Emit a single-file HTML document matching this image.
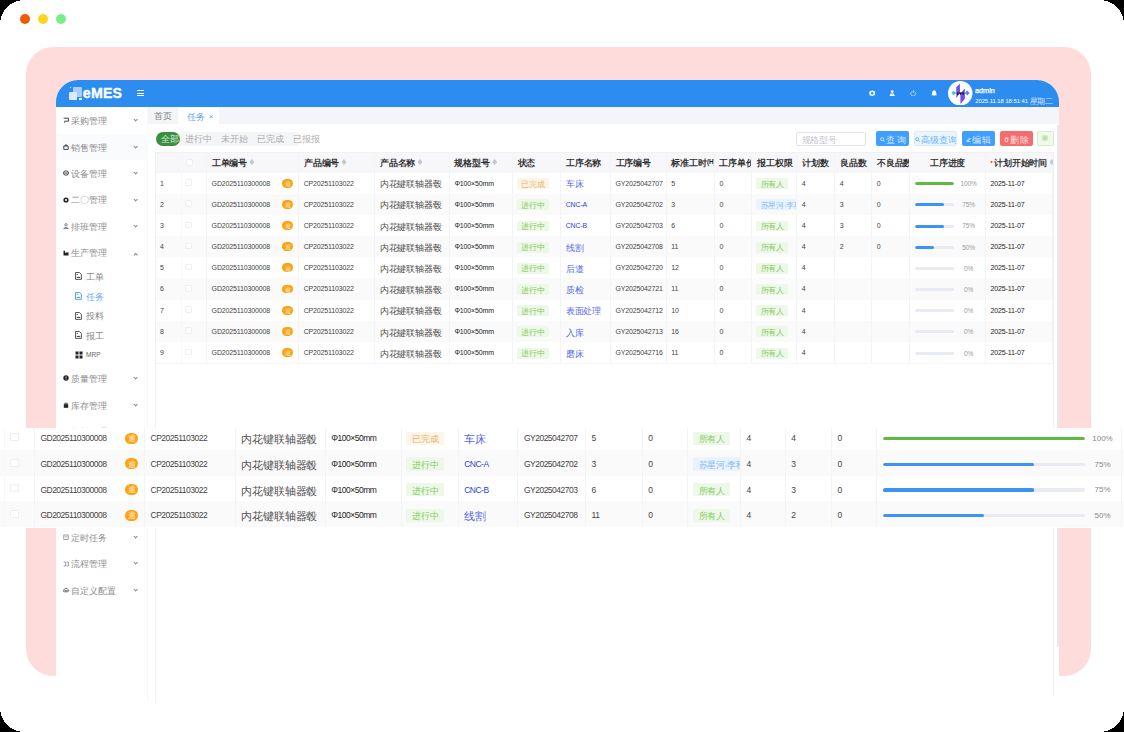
<!DOCTYPE html>
<html><head><meta charset="utf-8"><title>eMES</title>
<style>
*{margin:0;padding:0;box-sizing:border-box}
html,body{width:1124px;height:732px;overflow:hidden;background:#000;font-family:"Liberation Sans",sans-serif}
i{font-style:normal;display:inline-block}
.frame{position:absolute;left:0;top:0;width:1124px;height:732px;overflow:hidden}
.bgsvg{position:absolute;left:0;top:0}
.dot{position:absolute;top:13.5px;width:10px;height:10px;border-radius:50%}
.d1{left:20.2px;background:#F05A00}
.d2{left:38px;background:#FFD524}
.d3{left:56.1px;background:#78F08A}
.pink{position:absolute;left:26px;top:47px;width:1065px;height:629px;background:#FFDCDC;border-radius:27px}
.app{position:absolute;left:56px;top:80px;width:1003px;height:622px;background:#fff;border-radius:22px 22px 0 0;overflow:hidden}
.hdr{position:absolute;left:0;top:0;width:1003px;height:27px;background:#2D8CF0}
.logo{position:absolute;left:0;top:0}
.lq1{position:absolute;left:16.5px;top:6.7px;width:9.3px;height:10.2px;background:#A9CDF8;border-radius:1px}
.lq2{position:absolute;left:12.5px;top:11.6px;width:8.9px;height:8.4px;background:#DCEBFD;border-radius:1px}
.lq3{position:absolute;left:23.3px;top:17.8px;width:2.5px;height:2.2px;background:#fff}
.lq4{position:absolute;left:14px;top:7px;width:1.2px;height:1.2px;background:#fff}
.lt{position:absolute;left:26.8px;top:5.3px;font-size:14.2px;font-weight:bold;color:#fff;line-height:17px;letter-spacing:0.2px;-webkit-text-stroke:0.35px #fff}
.burger{position:absolute;left:81px;top:10.2px;width:7px;height:6.3px}
.burger i{display:block;height:1.1px;background:#fff;margin-bottom:1.5px}
.hsvg{position:absolute}
.avatar{position:absolute;left:892px;top:0.7px;width:24.5px;height:24.5px}
.avatar svg{display:block}
.uname{position:absolute;left:919px;top:5.6px;font-size:7.3px;color:#fff;line-height:9px;-webkit-text-stroke:0.25px #fff}
.udate{position:absolute;left:919.2px;top:17.6px;font-size:5.8px;color:#fff;line-height:7px;white-space:nowrap}
.side{position:absolute;left:0;top:27px;width:92px;height:595px;background:#fff}
.sideline{position:absolute;left:91.4px;top:27px;width:1px;height:595px;background:#F7F8FA}
.mi{position:absolute;left:0;width:92px;height:26.2px;margin-top:-13.1px}
.mi .mic{position:absolute;left:7.7px;top:10.6px;width:5px;height:5px;border:1.2px solid #444;border-radius:1px}
.mi .mt{position:absolute;left:15.4px;top:0;line-height:26.2px;font-size:6.5px;color:#707070}
.chev{position:absolute;left:77.6px;top:10.8px;width:3.4px;height:3.4px;border-right:0.7px solid #8a8a8a;border-bottom:0.7px solid #8a8a8a;transform:rotate(45deg)}
.chev.up{transform:rotate(-135deg);top:13px}
.si{position:absolute;left:0;width:92px;height:20px;margin-top:-10px}
.si .doc{position:absolute;left:19.1px;top:6.2px;width:6.8px;height:7.6px;border:1px solid #333;border-radius:1px}
.si .mt{position:absolute;left:30.1px;top:0;line-height:20px;font-size:6.5px;color:#666}
.si.act .doc{border-color:#3D8FF5}
.si.act .mt{color:#3D8FF5}
.tabbar{position:absolute;left:92px;top:27px;width:911px;height:16.5px;background:#F3F5F8}
.tab0{position:absolute;left:0;top:0;width:27px;height:16.5px;line-height:16.5px;font-size:6.5px;color:#666;padding-left:6px}
.tab1{position:absolute;left:30px;top:1px;width:40.5px;height:15.5px;background:#fff;line-height:15px;font-size:6.5px;color:#2D8CF0;padding-left:9px}
.tab1 .x{margin-left:4px;color:#5A9BEA;font-size:8px;vertical-align:-0.5px}
.pills{position:absolute;left:99.8px;top:51.5px;width:145.2px;height:14.9px;background:#F4F5F7;border-radius:7.5px;font-size:6.5px;color:#999;line-height:14.9px;white-space:nowrap}
.pill{display:inline-block;height:14.9px;padding:0 4.4px;margin-right:0.5px}
.pill.act{background:#3A8F3E;color:#fff;border-radius:7.5px;width:24.5px;padding:0 0 0 5px}
.search{position:absolute;left:740px;top:51.5px;width:70.4px;height:14.4px;border:0.8px solid #E2E4EA;border-radius:2px;font-size:6.3px;color:#B5B8BF;line-height:13px;padding-left:4.5px}
.btn{position:absolute;top:51.2px;height:14.4px;border-radius:2px;font-size:6.3px;line-height:15.6px;text-align:center;color:#fff;white-space:nowrap;overflow:hidden}
.bp{background:#409EFF}
.bl{background:#ECF5FF;border:0.8px solid #D9ECFF;color:#409EFF;line-height:14px}
.br{background:#F56C6C}
.bg{background:#F0F9EB;border:0.8px solid #D5EDC8;color:#67C23A;line-height:12.5px}
.tblwrap{position:absolute;left:0;top:72px;width:1003px;height:550px}
.tline{position:absolute;top:72px;width:1px;height:630px;background:#EEF0F6}
.vscroll{position:absolute;left:1001px;top:45.2px;width:2px;height:521.5px;background:#E8E9EE}
.mtbl,.stbl{position:absolute;top:0}
.stbl{top:-3.2px}
.thead{position:absolute;left:0;background:#F7F7F9;border-top:1px solid #F0F1F7}
.th,.td{position:absolute;top:0;padding-left:5px;white-space:nowrap;overflow:hidden}
.th{font-size:6.3px;font-weight:bold;color:#1a1a1a}
.th.center{text-align:center;padding-left:0}
.vl{position:absolute;width:1px;background:#F3F4F8}
.tr{position:absolute;left:0;background:#fff}
.tr.stripe{background:#FAFAFA}
.td{font-size:7px;color:#444;letter-spacing:-0.15px}
.dk{color:#222}
.lnk{color:#2E3FE0}
.sort{display:inline-block;width:4.4px;height:6px;margin-left:2.4px;vertical-align:middle;position:relative;top:-0.3px;background:linear-gradient(#C4C7CE 44%,transparent 44%,transparent 56%,#C4C7CE 56%);clip-path:polygon(50% 0,100% 42%,100% 58%,50% 100%,0 58%,0 42%)}
.req{color:#F44;margin-right:1px}
.cb{display:inline-block;width:7px;height:7px;border:0.8px solid #EDEFF3;border-radius:1px;background:#fff;vertical-align:middle}
.td.c1,.th .hcb{}
.td.c1{padding-left:4px}
.mtbl .td .cb{position:relative;top:-1.2px;width:6.6px;height:6.6px}
.th .hcb{margin-left:-0.4px}
.yu{position:absolute;right:5.7px;top:50%;margin-top:-4.45px;width:10.8px;height:8.9px;border-radius:4.5px;background:#FFA20F;color:#fff;font-size:5px;line-height:8.9px;text-align:center;letter-spacing:0}
.tag{display:inline-block;height:10.9px;line-height:10.9px;padding:0 3.6px 0 4.6px;border-radius:1.5px;font-size:5.7px;vertical-align:middle;letter-spacing:0}
.to{background:#FDF5EA;color:#E6A23C}
.tg{background:#EEF8E8;color:#67C23A}
.tb{background:#EAF3FF;color:#6AAEF5}
.pbar{display:inline-block;width:39px;height:3px;border-radius:1.5px;background:#E8EBF2;vertical-align:middle;position:relative;overflow:hidden}
.pfill{position:absolute;left:0;top:0;height:3px;border-radius:1.5px;background:#3D92F5}
.pfill.pg{background:#5DBB3D}
.pct{display:inline-block;margin-left:5.5px;width:19px;text-align:center;color:#999;font-size:6.5px;vertical-align:middle}
.strip{position:absolute;left:0;top:427.5px;width:1124px;height:100.5px;background:#fff;overflow:hidden}
.stbl .td{font-size:8.5px;letter-spacing:-0.5px}
.stbl .td{padding-left:6px;padding-top:2px}
.stbl .td.c15{padding-top:1.6px}
.stbl .cb{width:8.2px;height:8.2px}
.stbl .yu{width:12.5px;height:11px;margin-top:-4.4px;border-radius:5.5px;line-height:11px;font-size:6px;right:6.5px}
.stbl .tag{height:13.5px;line-height:13.5px;font-size:6.9px;padding:0 4.8px 0 5.9px;position:relative;top:-0.7px}
.stbl .pbar{width:202.5px;height:3.2px;border-radius:1.6px}
.stbl .pfill{height:3.2px;border-radius:1.6px}
.stbl .pct{margin-left:5px;width:25px;font-size:8px;letter-spacing:0;color:#888}

.hov{position:absolute;left:0;top:27px;width:92px;height:26.2px;background:#FAFBFD}
.mi .mic{position:absolute;left:7.2px;top:10.1px;width:6px;height:6px;border:none}
.mi .mic svg,.si .doc svg{display:block}
.si .doc{border:none;left:18.8px;top:6.2px;width:7.1px;height:8px}
.bi{display:inline-block;vertical-align:middle;margin-right:1px;position:relative;top:-0.5px}
.bg svg{display:inline-block;vertical-align:middle;position:relative;top:-0.5px}

.stbl .td.c1{padding-top:0}


.zh{font-size:1.35em;letter-spacing:-0.01em;vertical-align:-0.2em;opacity:0.8}
.td .zh{font-size:1.25em;letter-spacing:-0.015em}
.td .tag .zh{font-size:1.35em;letter-spacing:-0.01em}
.stbl .td .zh{font-size:1.25em;letter-spacing:-0.015em}
.stbl .td .tag .zh{font-size:1.35em;letter-spacing:-0.01em}
.th .zh{opacity:0.9}
.tag{margin-left:-0.9px}
.hl{position:absolute;height:1px;background:#F4F5F9}
.vl.vlf{background:#F8F8FB}

</style></head><body>
<div class="frame">
 <svg class="bgsvg" width="1124" height="732" viewBox="0 0 1124 732"><rect x="0" y="0" width="1124" height="732" rx="24.5" ry="24.5" fill="#fff" shape-rendering="crispEdges"/></svg>
 <i class="dot d1"></i><i class="dot d2"></i><i class="dot d3"></i>
 <div class="pink"></div>
 <div class="app">
  <div class="hdr">
   <div class="logo"><i class="lq1"></i><i class="lq2"></i><i class="lq3"></i><i class="lq4"></i><span class="lt">eMES</span></div>
   <div class="burger"><i></i><i></i><i></i></div>

   <svg class="hsvg" style="left:812.8px;top:9.5px" width="6.4" height="6.4" viewBox="0 0 8 8"><path d="M4 0.4L5.3 1.2H6.8L7.6 2.6V5.4L6.8 6.8H5.3L4 7.6L2.7 6.8H1.2L0.4 5.4V2.6L1.2 1.2H2.7Z" fill="#fff"/><circle cx="4" cy="4" r="1.6" fill="#2D8CF0"/></svg>
   <svg class="hsvg" style="left:833.3px;top:9.8px" width="6.4" height="6.4" viewBox="0 0 8 8"><circle cx="4" cy="2" r="1.7" fill="#fff"/><path d="M0.6 7.8L2 4.4H6L7.4 7.8Z" fill="#fff"/><path d="M4 4.6L3.2 6H4.8Z" fill="#2D8CF0"/></svg>
   <svg class="hsvg" style="left:854.3px;top:9.9px" width="6.4" height="6.4" viewBox="0 0 8 8"><path d="M2.3 1.9A3.1 3.1 0 1 0 5.7 1.9" fill="none" stroke="#fff" stroke-width="0.75"/><rect x="3.6" y="0.3" width="0.8" height="3.4" fill="#fff"/></svg>
   <svg class="hsvg" style="left:875.1px;top:9.8px" width="6.4" height="6.4" viewBox="0 0 8 8"><path d="M4 0.3Q6.6 0.6 6.6 3.4V5.4L7.6 6.6H0.4L1.4 5.4V3.4Q1.4 0.6 4 0.3Z" fill="#fff"/><circle cx="4" cy="7.3" r="0.8" fill="#fff"/></svg>

   <div class="avatar"><svg width="24.5" height="24.5" viewBox="0 0 24.5 24.5"><circle cx="12.25" cy="12.25" r="12.2" fill="#fff"/>
<defs><linearGradient id="pg" x1="0" y1="0" x2="1" y2="1"><stop offset="0" stop-color="#5B5BF0"/><stop offset="1" stop-color="#8A3BE8"/></linearGradient></defs>
<g transform="translate(-1.9,-0.6)"><path d="M5.3 12.6L7.5 10.2L9.7 12.6L7.5 15Z" fill="#3ED8C3"/><path d="M19 12.6L21.2 10.2L23.4 12.6L21.2 15Z" fill="#3C8CF8"/>
<rect x="8" y="12.2" width="12" height="0.9" fill="#6C7CF0"/>
<path d="M13.7 3L13.9 12.6L10.3 17.6L10.1 7.2Z" fill="url(#pg)"/><path d="M18.7 8L18.8 18.3L14.4 23.6L14.2 13.2Z" fill="url(#pg)"/>
<path d="M11 12.2H17.8V14.4H16.6V13.2H15V14.4H13.8V13.2H12.2V14.6H11Z" fill="#1A1A1A"/></g></svg></div>
   <div class="uname">admin</div>
   <div class="udate">2025.11.18 18:51:41 <span class="zh">星期二</span></div>
  </div>
  <div class="side">
<div class="hov"></div>
<div class="mi" style="top:13.3px"><i class="mic"><svg width="6" height="6" viewBox="0 0 6 6"><path d="M0.6 1.2H5.4V4.2H1.4" fill="none" stroke="#333" stroke-width="0.9"/><rect x="1" y="4.6" width="1" height="1" fill="#333"/></svg></i><span class="mt"><span class="zh">采购管理</span></span><i class="chev"></i></div>
<div class="mi" style="top:40px"><i class="mic"><svg width="6" height="6" viewBox="0 0 6 6"><path d="M0.8 2H5.2V5.4H0.8Z" fill="none" stroke="#333" stroke-width="0.9"/><path d="M2 2V1H4V2" fill="none" stroke="#333" stroke-width="0.8"/></svg></i><span class="mt"><span class="zh">销售管理</span></span><i class="chev"></i></div>
<div class="mi" style="top:66.3px"><i class="mic"><svg width="6" height="6" viewBox="0 0 6 6"><ellipse cx="3" cy="3" rx="2.5" ry="2.2" fill="none" stroke="#333" stroke-width="0.9"/><rect x="1.2" y="2.6" width="3.6" height="0.9" fill="#333"/></svg></i><span class="mt"><span class="zh">设备管理</span></span><i class="chev"></i></div>
<div class="mi" style="top:92.8px"><i class="mic"><svg width="6" height="6" viewBox="0 0 6 6"><circle cx="3" cy="3" r="2.6" fill="#222"/><circle cx="3" cy="3" r="1.1" fill="#fff"/></svg></i><span class="mt"><span class="zh">二〇管理</span></span><i class="chev"></i></div>
<div class="mi" style="top:119.3px"><i class="mic"><svg width="6" height="6" viewBox="0 0 6 6"><circle cx="3" cy="1.8" r="1.2" fill="none" stroke="#555" stroke-width="0.7"/><path d="M0.6 5.6Q3 2.8 5.4 5.6Z" fill="none" stroke="#555" stroke-width="0.7"/></svg></i><span class="mt"><span class="zh">排班管理</span></span><i class="chev"></i></div>
<div class="mi" style="top:145.8px"><i class="mic"><svg width="6" height="6" viewBox="0 0 6 6"><path d="M0.5 5.6V0.8H2V3L3.6 2V3L5.5 2V5.6Z" fill="#222"/></svg></i><span class="mt"><span class="zh">生产管理</span></span><i class="chev up"></i></div>
<div class="si" style="top:168.8px"><i class="doc"><svg width="7.1" height="8" viewBox="0 0 8 9"><path d="M0.6 0.6H5.2L7.2 2.6V8.3H0.6Z" fill="none" stroke="#333" stroke-width="0.95"/><rect x="2" y="2.2" width="1.2" height="1.1" fill="#333"/><rect x="2" y="5.5" width="3.8" height="1.1" fill="#333"/></svg></i><span class="mt"><span class="zh">工单</span></span></div>
<div class="si act" style="top:188.8px"><i class="doc"><svg width="7.1" height="8" viewBox="0 0 8 9"><path d="M0.6 0.6H5.2L7.2 2.6V8.3H0.6Z" fill="none" stroke="#3D8FF5" stroke-width="0.95"/><rect x="2" y="2.2" width="1.2" height="1.1" fill="#3D8FF5"/><rect x="2" y="5.5" width="3.8" height="1.1" fill="#3D8FF5"/></svg></i><span class="mt"><span class="zh">任务</span></span></div>
<div class="si" style="top:208.7px"><i class="doc"><svg width="7.1" height="8" viewBox="0 0 8 9"><path d="M0.6 0.6H5.2L7.2 2.6V8.3H0.6Z" fill="none" stroke="#333" stroke-width="0.95"/><rect x="2" y="2.2" width="1.2" height="1.1" fill="#333"/><rect x="2" y="5.5" width="3.8" height="1.1" fill="#333"/></svg></i><span class="mt"><span class="zh">投料</span></span></div>
<div class="si" style="top:228.2px"><i class="doc"><svg width="7.1" height="8" viewBox="0 0 8 9"><path d="M0.6 0.6H5.2L7.2 2.6V8.3H0.6Z" fill="none" stroke="#333" stroke-width="0.95"/><rect x="2" y="2.2" width="1.2" height="1.1" fill="#333"/><rect x="2" y="5.5" width="3.8" height="1.1" fill="#333"/></svg></i><span class="mt"><span class="zh">报工</span></span></div>
<div class="si" style="top:247.8px"><i class="doc"><svg width="8" height="8" viewBox="0 0 8 8"><rect x="0.5" y="0.5" width="3" height="3" fill="#222"/><rect x="4.5" y="0.5" width="3" height="3" fill="#222"/><rect x="0.5" y="4.5" width="3" height="3" fill="#222"/><rect x="4.5" y="4.5" width="3" height="3" fill="#222"/></svg></i><span class="mt">MRP</span></div>
<div class="mi" style="top:271.3px"><i class="mic"><svg width="6" height="6" viewBox="0 0 6 6"><circle cx="3" cy="3" r="2.7" fill="#222"/><rect x="2.6" y="1.5" width="0.8" height="1.8" fill="#fff"/><rect x="2.6" y="3.9" width="0.8" height="0.7" fill="#fff"/></svg></i><span class="mt"><span class="zh">质量管理</span></span><i class="chev"></i></div>
<div class="mi" style="top:298px"><i class="mic"><svg width="6" height="6" viewBox="0 0 6 6"><rect x="0.8" y="2.2" width="4.4" height="3.6" fill="#222"/><path d="M1.8 2.4V1.2H4.2V2.4" fill="none" stroke="#222" stroke-width="0.8"/></svg></i><span class="mt"><span class="zh">库存管理</span></span><i class="chev"></i></div>
<div class="mi" style="top:324.5px"><i class="mic"><svg width="6" height="6" viewBox="0 0 6 6"><path d="M0.6 1.2H5.4V4.2H1.4" fill="none" stroke="#333" stroke-width="0.9"/><rect x="1" y="4.6" width="1" height="1" fill="#333"/></svg></i><span class="mt"><span class="zh">物料管理</span></span><i class="chev"></i></div>
<div class="mi" style="top:351px"><i class="mic"><svg width="6" height="6" viewBox="0 0 6 6"><ellipse cx="3" cy="3" rx="2.5" ry="2.2" fill="none" stroke="#333" stroke-width="0.9"/><rect x="1.2" y="2.6" width="3.6" height="0.9" fill="#333"/></svg></i><span class="mt"><span class="zh">基础数据</span></span><i class="chev"></i></div>
<div class="mi" style="top:377.5px"><i class="mic"><svg width="6" height="6" viewBox="0 0 6 6"><rect x="0.8" y="1" width="4.4" height="4.5" fill="none" stroke="#777" stroke-width="0.7"/><rect x="1.5" y="2.6" width="3" height="0.6" fill="#777"/></svg></i><span class="mt"><span class="zh">报表管理</span></span><i class="chev"></i></div>
<div class="mi" style="top:404px"><i class="mic"><svg width="6" height="6" viewBox="0 0 6 6"><circle cx="3" cy="3" r="2.6" fill="#222"/><circle cx="3" cy="3" r="1.1" fill="#fff"/></svg></i><span class="mt"><span class="zh">系统管理</span></span><i class="chev"></i></div>
<div class="mi" style="top:430px"><i class="mic"><svg width="6" height="6" viewBox="0 0 6 6"><rect x="0.8" y="1" width="4.4" height="4.5" fill="none" stroke="#777" stroke-width="0.7"/><rect x="1.5" y="2.6" width="3" height="0.6" fill="#777"/></svg></i><span class="mt"><span class="zh">定时任务</span></span><i class="chev"></i></div>
<div class="mi" style="top:456.7px"><i class="mic"><svg width="6" height="6" viewBox="0 0 6 6"><path d="M0.6 1H2.6V5H0.6M3.4 1H5.4V5H3.4" fill="none" stroke="#777" stroke-width="0.7"/></svg></i><span class="mt"><span class="zh">流程管理</span></span><i class="chev"></i></div>
<div class="mi" style="top:483px"><i class="mic"><svg width="6" height="6" viewBox="0 0 6 6"><path d="M1 4.8Q0.2 4.6 0.6 3.4Q1 2 2.6 1.4Q4.4 1 5.2 2.8Q5.8 4.4 4.8 4.8Z" fill="none" stroke="#444" stroke-width="0.8"/><rect x="1.6" y="3.2" width="2.8" height="0.7" fill="#444"/></svg></i><span class="mt"><span class="zh">自定义配置</span></span><i class="chev"></i></div>
  </div>
  <div class="sideline"></div>
  <div class="tabbar"><span class="tab0"><span class="zh">首页</span></span><span class="tab1"><span class="zh">任务</span><i class="x">×</i></span></div>
  <div class="pills"><span class="pill act"><span class="zh">全部</span></span><span class="pill"><span class="zh">进行中</span></span><span class="pill"><span class="zh">未开始</span></span><span class="pill"><span class="zh">已完成</span></span><span class="pill"><span class="zh">已报报</span></span></div>
  <div class="search"><span class="zh">规格型号</span></div>
  <div class="btn bp" style="left:820.3px;width:32.9px"><svg class="bi" width="5" height="5" viewBox="0 0 5 5"><circle cx="2.2" cy="2.2" r="1.6" fill="none" stroke="#fff" stroke-width="0.7"/><path d="M3.4 3.4L4.6 4.6" stroke="#fff" stroke-width="0.7"/></svg><span class="zh">查</span> <span class="zh">询</span></div>
  <div class="btn bl" style="left:858.3px;width:42.7px"><svg class="bi" width="5" height="5" viewBox="0 0 5 5"><circle cx="2.2" cy="2.2" r="1.6" fill="none" stroke="#409EFF" stroke-width="0.7"/><path d="M3.4 3.4L4.6 4.6" stroke="#409EFF" stroke-width="0.7"/></svg><span class="zh">高级查询</span></div>
  <div class="btn bp" style="left:906.1px;width:33px"><svg class="bi" width="5" height="5" viewBox="0 0 5 5"><path d="M0.6 4.4H4.4M1 3.6L3.6 1L4.2 1.6L1.6 4.2Z" fill="none" stroke="#fff" stroke-width="0.7"/></svg><span class="zh">编</span> <span class="zh">辑</span></div>
  <div class="btn br" style="left:944.2px;width:32.6px"><svg class="bi" width="5" height="5" viewBox="0 0 5 5"><path d="M0.6 1.2H4.4M1.2 1.2V4.6H3.8V1.2M2 0.4H3" fill="none" stroke="#fff" stroke-width="0.7"/></svg><span class="zh">删</span> <span class="zh">除</span></div>
  <div class="btn bg" style="left:981.3px;width:16.4px"><svg width="6" height="6" viewBox="0 0 6 6"><path d="M0.8 0.8H5.2V5.2H0.8ZM0.8 2.3H5.2M0.8 3.7H5.2M2.3 0.8V5.2M3.7 0.8V5.2" fill="none" stroke="#7CC85A" stroke-width="0.35"/></svg></div>
<div class="mtbl" style="left:99px;top:72px;width:898px">
<div class="thead" style="top:0;height:20.5px;width:898px"></div>
<div class="th" style="left:0px;width:26px;height:20.5px;line-height:20.5px"></div>
<div class="th c1" style="left:26px;width:25.6px;height:20.5px;line-height:20.5px"><i class="cb"></i></div>
<div class="vl vlf" style="left:25.5px;top:0;height:20.5px"></div>
<div class="th" style="left:51.6px;width:92.1px;height:20.5px;line-height:20.5px"><span class="zh">工单编号</span><i class="sort"></i></div>
<div class="vl" style="left:51.1px;top:0;height:20.5px"></div>
<div class="th" style="left:143.7px;width:76.0px;height:20.5px;line-height:20.5px"><span class="zh">产品编号</span><i class="sort"></i></div>
<div class="vl" style="left:143.2px;top:0;height:20.5px"></div>
<div class="th" style="left:219.7px;width:74.7px;height:20.5px;line-height:20.5px"><span class="zh">产品名称</span><i class="sort"></i></div>
<div class="vl" style="left:219.2px;top:0;height:20.5px"></div>
<div class="th" style="left:294.4px;width:63.1px;height:20.5px;line-height:20.5px"><span class="zh">规格型号</span><i class="sort"></i></div>
<div class="vl" style="left:293.9px;top:0;height:20.5px"></div>
<div class="th" style="left:357.5px;width:48.2px;height:20.5px;line-height:20.5px"><span class="zh">状态</span></div>
<div class="vl" style="left:357.0px;top:0;height:20.5px"></div>
<div class="th" style="left:405.7px;width:49.8px;height:20.5px;line-height:20.5px"><span class="zh">工序名称</span></div>
<div class="vl" style="left:405.2px;top:0;height:20.5px"></div>
<div class="th" style="left:455.5px;width:55.8px;height:20.5px;line-height:20.5px"><span class="zh">工序编号</span></div>
<div class="vl" style="left:455.0px;top:0;height:20.5px"></div>
<div class="th" style="left:511.3px;width:48.1px;height:20.5px;line-height:20.5px"><span class="zh">标准工时</span>(H)</div>
<div class="vl" style="left:510.8px;top:0;height:20.5px"></div>
<div class="th" style="left:559.4px;width:37.4px;height:20.5px;line-height:20.5px"><span class="zh">工序单价</span></div>
<div class="vl" style="left:558.9px;top:0;height:20.5px"></div>
<div class="th" style="left:596.8px;width:44.9px;height:20.5px;line-height:20.5px"><span class="zh">报工权限</span></div>
<div class="vl" style="left:596.3px;top:0;height:20.5px"></div>
<div class="th" style="left:641.7px;width:38.1px;height:20.5px;line-height:20.5px"><span class="zh">计划数</span></div>
<div class="vl" style="left:641.2px;top:0;height:20.5px"></div>
<div class="th" style="left:679.8px;width:36.9px;height:20.5px;line-height:20.5px"><span class="zh">良品数</span></div>
<div class="vl" style="left:679.3px;top:0;height:20.5px"></div>
<div class="th" style="left:716.7px;width:37.9px;height:20.5px;line-height:20.5px"><span class="zh">不良品数</span></div>
<div class="vl" style="left:716.2px;top:0;height:20.5px"></div>
<div class="th center" style="left:754.6px;width:76.0px;height:20.5px;line-height:20.5px"><span class="zh">工序进度</span></div>
<div class="vl" style="left:754.1px;top:0;height:20.5px"></div>
<div class="th" style="left:830.6px;width:67.4px;height:20.5px;line-height:20.5px"><i class="req">•</i><span class="zh">计划开始时间</span><i class="sort"></i></div>
<div class="vl" style="left:830.1px;top:0;height:20.5px"></div>
<div class="tr" style="top:20.5px;height:21.18px;width:898px">
<div class="td" style="left:0px;width:26px;height:21.18px;line-height:21.18px">1</div>
<div class="td c1" style="left:26px;width:25.6px;height:21.18px;line-height:21.18px"><i class="cb"></i></div>
<div class="vl vlf" style="left:25.5px;top:0;height:21.18px"></div>
<div class="td" style="left:51.6px;width:92.1px;height:21.18px;line-height:21.18px">GD2025110300008<i class="yu"><span class="zh">逾</span></i></div>
<div class="vl" style="left:51.1px;top:0;height:21.18px"></div>
<div class="td" style="left:143.7px;width:76.0px;height:21.18px;line-height:21.18px">CP20251103022</div>
<div class="vl" style="left:143.2px;top:0;height:21.18px"></div>
<div class="td" style="left:219.7px;width:74.7px;height:21.18px;line-height:21.18px"><span class="dk"><span class="zh">内花键联轴器毂</span></span></div>
<div class="vl" style="left:219.2px;top:0;height:21.18px"></div>
<div class="td" style="left:294.4px;width:63.1px;height:21.18px;line-height:21.18px"><span class="dk">Φ100×50mm</span></div>
<div class="vl" style="left:293.9px;top:0;height:21.18px"></div>
<div class="td" style="left:357.5px;width:48.2px;height:21.18px;line-height:21.18px"><span class="tag to"><span class="zh">已完成</span></span></div>
<div class="vl" style="left:357.0px;top:0;height:21.18px"></div>
<div class="td" style="left:405.7px;width:49.8px;height:21.18px;line-height:21.18px"><span class="lnk"><span class="zh">车床</span></span></div>
<div class="vl" style="left:405.2px;top:0;height:21.18px"></div>
<div class="td" style="left:455.5px;width:55.8px;height:21.18px;line-height:21.18px">GY2025042707</div>
<div class="vl" style="left:455.0px;top:0;height:21.18px"></div>
<div class="td" style="left:511.3px;width:48.1px;height:21.18px;line-height:21.18px">5</div>
<div class="vl" style="left:510.8px;top:0;height:21.18px"></div>
<div class="td" style="left:559.4px;width:37.4px;height:21.18px;line-height:21.18px">0</div>
<div class="vl" style="left:558.9px;top:0;height:21.18px"></div>
<div class="td" style="left:596.8px;width:44.9px;height:21.18px;line-height:21.18px"><span class="tag tg"><span class="zh">所有人</span></span></div>
<div class="vl" style="left:596.3px;top:0;height:21.18px"></div>
<div class="td" style="left:641.7px;width:38.1px;height:21.18px;line-height:21.18px">4</div>
<div class="vl" style="left:641.2px;top:0;height:21.18px"></div>
<div class="td" style="left:679.8px;width:36.9px;height:21.18px;line-height:21.18px">4</div>
<div class="vl" style="left:679.3px;top:0;height:21.18px"></div>
<div class="td" style="left:716.7px;width:37.9px;height:21.18px;line-height:21.18px">0</div>
<div class="vl" style="left:716.2px;top:0;height:21.18px"></div>
<div class="td c15" style="left:754.6px;width:76.0px;height:21.18px;line-height:21.18px"><span class="pbar"><span class="pfill pg" style="width:100%"></span></span><span class="pct">100%</span></div>
<div class="vl" style="left:754.1px;top:0;height:21.18px"></div>
<div class="td" style="left:830.6px;width:67.4px;height:21.18px;line-height:21.18px"><span class="dk">2025-11-07</span></div>
<div class="vl" style="left:830.1px;top:0;height:21.18px"></div>
<div class="vl" style="left:896.5px;top:0;height:21.18px"></div>
</div>
<div class="tr stripe" style="top:41.68px;height:21.18px;width:898px">
<div class="td" style="left:0px;width:26px;height:21.18px;line-height:21.18px">2</div>
<div class="td c1" style="left:26px;width:25.6px;height:21.18px;line-height:21.18px"><i class="cb"></i></div>
<div class="vl vlf" style="left:25.5px;top:0;height:21.18px"></div>
<div class="td" style="left:51.6px;width:92.1px;height:21.18px;line-height:21.18px">GD2025110300008<i class="yu"><span class="zh">逾</span></i></div>
<div class="vl" style="left:51.1px;top:0;height:21.18px"></div>
<div class="td" style="left:143.7px;width:76.0px;height:21.18px;line-height:21.18px">CP20251103022</div>
<div class="vl" style="left:143.2px;top:0;height:21.18px"></div>
<div class="td" style="left:219.7px;width:74.7px;height:21.18px;line-height:21.18px"><span class="dk"><span class="zh">内花键联轴器毂</span></span></div>
<div class="vl" style="left:219.2px;top:0;height:21.18px"></div>
<div class="td" style="left:294.4px;width:63.1px;height:21.18px;line-height:21.18px"><span class="dk">Φ100×50mm</span></div>
<div class="vl" style="left:293.9px;top:0;height:21.18px"></div>
<div class="td" style="left:357.5px;width:48.2px;height:21.18px;line-height:21.18px"><span class="tag tg"><span class="zh">进行中</span></span></div>
<div class="vl" style="left:357.0px;top:0;height:21.18px"></div>
<div class="td" style="left:405.7px;width:49.8px;height:21.18px;line-height:21.18px"><span class="lnk">CNC-A</span></div>
<div class="vl" style="left:405.2px;top:0;height:21.18px"></div>
<div class="td" style="left:455.5px;width:55.8px;height:21.18px;line-height:21.18px">GY2025042702</div>
<div class="vl" style="left:455.0px;top:0;height:21.18px"></div>
<div class="td" style="left:511.3px;width:48.1px;height:21.18px;line-height:21.18px">3</div>
<div class="vl" style="left:510.8px;top:0;height:21.18px"></div>
<div class="td" style="left:559.4px;width:37.4px;height:21.18px;line-height:21.18px">0</div>
<div class="vl" style="left:558.9px;top:0;height:21.18px"></div>
<div class="td" style="left:596.8px;width:44.9px;height:21.18px;line-height:21.18px"><span class="tag tb"><span class="zh">苏星河</span>,<span class="zh">李秋水</span></span></div>
<div class="vl" style="left:596.3px;top:0;height:21.18px"></div>
<div class="td" style="left:641.7px;width:38.1px;height:21.18px;line-height:21.18px">4</div>
<div class="vl" style="left:641.2px;top:0;height:21.18px"></div>
<div class="td" style="left:679.8px;width:36.9px;height:21.18px;line-height:21.18px">3</div>
<div class="vl" style="left:679.3px;top:0;height:21.18px"></div>
<div class="td" style="left:716.7px;width:37.9px;height:21.18px;line-height:21.18px">0</div>
<div class="vl" style="left:716.2px;top:0;height:21.18px"></div>
<div class="td c15" style="left:754.6px;width:76.0px;height:21.18px;line-height:21.18px"><span class="pbar"><span class="pfill" style="width:75%"></span></span><span class="pct">75%</span></div>
<div class="vl" style="left:754.1px;top:0;height:21.18px"></div>
<div class="td" style="left:830.6px;width:67.4px;height:21.18px;line-height:21.18px"><span class="dk">2025-11-07</span></div>
<div class="vl" style="left:830.1px;top:0;height:21.18px"></div>
<div class="vl" style="left:896.5px;top:0;height:21.18px"></div>
</div>
<div class="tr" style="top:62.86px;height:21.18px;width:898px">
<div class="td" style="left:0px;width:26px;height:21.18px;line-height:21.18px">3</div>
<div class="td c1" style="left:26px;width:25.6px;height:21.18px;line-height:21.18px"><i class="cb"></i></div>
<div class="vl vlf" style="left:25.5px;top:0;height:21.18px"></div>
<div class="td" style="left:51.6px;width:92.1px;height:21.18px;line-height:21.18px">GD2025110300008<i class="yu"><span class="zh">逾</span></i></div>
<div class="vl" style="left:51.1px;top:0;height:21.18px"></div>
<div class="td" style="left:143.7px;width:76.0px;height:21.18px;line-height:21.18px">CP20251103022</div>
<div class="vl" style="left:143.2px;top:0;height:21.18px"></div>
<div class="td" style="left:219.7px;width:74.7px;height:21.18px;line-height:21.18px"><span class="dk"><span class="zh">内花键联轴器毂</span></span></div>
<div class="vl" style="left:219.2px;top:0;height:21.18px"></div>
<div class="td" style="left:294.4px;width:63.1px;height:21.18px;line-height:21.18px"><span class="dk">Φ100×50mm</span></div>
<div class="vl" style="left:293.9px;top:0;height:21.18px"></div>
<div class="td" style="left:357.5px;width:48.2px;height:21.18px;line-height:21.18px"><span class="tag tg"><span class="zh">进行中</span></span></div>
<div class="vl" style="left:357.0px;top:0;height:21.18px"></div>
<div class="td" style="left:405.7px;width:49.8px;height:21.18px;line-height:21.18px"><span class="lnk">CNC-B</span></div>
<div class="vl" style="left:405.2px;top:0;height:21.18px"></div>
<div class="td" style="left:455.5px;width:55.8px;height:21.18px;line-height:21.18px">GY2025042703</div>
<div class="vl" style="left:455.0px;top:0;height:21.18px"></div>
<div class="td" style="left:511.3px;width:48.1px;height:21.18px;line-height:21.18px">6</div>
<div class="vl" style="left:510.8px;top:0;height:21.18px"></div>
<div class="td" style="left:559.4px;width:37.4px;height:21.18px;line-height:21.18px">0</div>
<div class="vl" style="left:558.9px;top:0;height:21.18px"></div>
<div class="td" style="left:596.8px;width:44.9px;height:21.18px;line-height:21.18px"><span class="tag tg"><span class="zh">所有人</span></span></div>
<div class="vl" style="left:596.3px;top:0;height:21.18px"></div>
<div class="td" style="left:641.7px;width:38.1px;height:21.18px;line-height:21.18px">4</div>
<div class="vl" style="left:641.2px;top:0;height:21.18px"></div>
<div class="td" style="left:679.8px;width:36.9px;height:21.18px;line-height:21.18px">3</div>
<div class="vl" style="left:679.3px;top:0;height:21.18px"></div>
<div class="td" style="left:716.7px;width:37.9px;height:21.18px;line-height:21.18px">0</div>
<div class="vl" style="left:716.2px;top:0;height:21.18px"></div>
<div class="td c15" style="left:754.6px;width:76.0px;height:21.18px;line-height:21.18px"><span class="pbar"><span class="pfill" style="width:75%"></span></span><span class="pct">75%</span></div>
<div class="vl" style="left:754.1px;top:0;height:21.18px"></div>
<div class="td" style="left:830.6px;width:67.4px;height:21.18px;line-height:21.18px"><span class="dk">2025-11-07</span></div>
<div class="vl" style="left:830.1px;top:0;height:21.18px"></div>
<div class="vl" style="left:896.5px;top:0;height:21.18px"></div>
</div>
<div class="tr stripe" style="top:84.04px;height:21.18px;width:898px">
<div class="td" style="left:0px;width:26px;height:21.18px;line-height:21.18px">4</div>
<div class="td c1" style="left:26px;width:25.6px;height:21.18px;line-height:21.18px"><i class="cb"></i></div>
<div class="vl vlf" style="left:25.5px;top:0;height:21.18px"></div>
<div class="td" style="left:51.6px;width:92.1px;height:21.18px;line-height:21.18px">GD2025110300008<i class="yu"><span class="zh">逾</span></i></div>
<div class="vl" style="left:51.1px;top:0;height:21.18px"></div>
<div class="td" style="left:143.7px;width:76.0px;height:21.18px;line-height:21.18px">CP20251103022</div>
<div class="vl" style="left:143.2px;top:0;height:21.18px"></div>
<div class="td" style="left:219.7px;width:74.7px;height:21.18px;line-height:21.18px"><span class="dk"><span class="zh">内花键联轴器毂</span></span></div>
<div class="vl" style="left:219.2px;top:0;height:21.18px"></div>
<div class="td" style="left:294.4px;width:63.1px;height:21.18px;line-height:21.18px"><span class="dk">Φ100×50mm</span></div>
<div class="vl" style="left:293.9px;top:0;height:21.18px"></div>
<div class="td" style="left:357.5px;width:48.2px;height:21.18px;line-height:21.18px"><span class="tag tg"><span class="zh">进行中</span></span></div>
<div class="vl" style="left:357.0px;top:0;height:21.18px"></div>
<div class="td" style="left:405.7px;width:49.8px;height:21.18px;line-height:21.18px"><span class="lnk"><span class="zh">线割</span></span></div>
<div class="vl" style="left:405.2px;top:0;height:21.18px"></div>
<div class="td" style="left:455.5px;width:55.8px;height:21.18px;line-height:21.18px">GY2025042708</div>
<div class="vl" style="left:455.0px;top:0;height:21.18px"></div>
<div class="td" style="left:511.3px;width:48.1px;height:21.18px;line-height:21.18px">11</div>
<div class="vl" style="left:510.8px;top:0;height:21.18px"></div>
<div class="td" style="left:559.4px;width:37.4px;height:21.18px;line-height:21.18px">0</div>
<div class="vl" style="left:558.9px;top:0;height:21.18px"></div>
<div class="td" style="left:596.8px;width:44.9px;height:21.18px;line-height:21.18px"><span class="tag tg"><span class="zh">所有人</span></span></div>
<div class="vl" style="left:596.3px;top:0;height:21.18px"></div>
<div class="td" style="left:641.7px;width:38.1px;height:21.18px;line-height:21.18px">4</div>
<div class="vl" style="left:641.2px;top:0;height:21.18px"></div>
<div class="td" style="left:679.8px;width:36.9px;height:21.18px;line-height:21.18px">2</div>
<div class="vl" style="left:679.3px;top:0;height:21.18px"></div>
<div class="td" style="left:716.7px;width:37.9px;height:21.18px;line-height:21.18px">0</div>
<div class="vl" style="left:716.2px;top:0;height:21.18px"></div>
<div class="td c15" style="left:754.6px;width:76.0px;height:21.18px;line-height:21.18px"><span class="pbar"><span class="pfill" style="width:50%"></span></span><span class="pct">50%</span></div>
<div class="vl" style="left:754.1px;top:0;height:21.18px"></div>
<div class="td" style="left:830.6px;width:67.4px;height:21.18px;line-height:21.18px"><span class="dk">2025-11-07</span></div>
<div class="vl" style="left:830.1px;top:0;height:21.18px"></div>
<div class="vl" style="left:896.5px;top:0;height:21.18px"></div>
</div>
<div class="tr" style="top:105.22px;height:21.18px;width:898px">
<div class="td" style="left:0px;width:26px;height:21.18px;line-height:21.18px">5</div>
<div class="td c1" style="left:26px;width:25.6px;height:21.18px;line-height:21.18px"><i class="cb"></i></div>
<div class="vl vlf" style="left:25.5px;top:0;height:21.18px"></div>
<div class="td" style="left:51.6px;width:92.1px;height:21.18px;line-height:21.18px">GD2025110300008<i class="yu"><span class="zh">逾</span></i></div>
<div class="vl" style="left:51.1px;top:0;height:21.18px"></div>
<div class="td" style="left:143.7px;width:76.0px;height:21.18px;line-height:21.18px">CP20251103022</div>
<div class="vl" style="left:143.2px;top:0;height:21.18px"></div>
<div class="td" style="left:219.7px;width:74.7px;height:21.18px;line-height:21.18px"><span class="dk"><span class="zh">内花键联轴器毂</span></span></div>
<div class="vl" style="left:219.2px;top:0;height:21.18px"></div>
<div class="td" style="left:294.4px;width:63.1px;height:21.18px;line-height:21.18px"><span class="dk">Φ100×50mm</span></div>
<div class="vl" style="left:293.9px;top:0;height:21.18px"></div>
<div class="td" style="left:357.5px;width:48.2px;height:21.18px;line-height:21.18px"><span class="tag tg"><span class="zh">进行中</span></span></div>
<div class="vl" style="left:357.0px;top:0;height:21.18px"></div>
<div class="td" style="left:405.7px;width:49.8px;height:21.18px;line-height:21.18px"><span class="lnk"><span class="zh">后道</span></span></div>
<div class="vl" style="left:405.2px;top:0;height:21.18px"></div>
<div class="td" style="left:455.5px;width:55.8px;height:21.18px;line-height:21.18px">GY2025042720</div>
<div class="vl" style="left:455.0px;top:0;height:21.18px"></div>
<div class="td" style="left:511.3px;width:48.1px;height:21.18px;line-height:21.18px">12</div>
<div class="vl" style="left:510.8px;top:0;height:21.18px"></div>
<div class="td" style="left:559.4px;width:37.4px;height:21.18px;line-height:21.18px">0</div>
<div class="vl" style="left:558.9px;top:0;height:21.18px"></div>
<div class="td" style="left:596.8px;width:44.9px;height:21.18px;line-height:21.18px"><span class="tag tg"><span class="zh">所有人</span></span></div>
<div class="vl" style="left:596.3px;top:0;height:21.18px"></div>
<div class="td" style="left:641.7px;width:38.1px;height:21.18px;line-height:21.18px">4</div>
<div class="vl" style="left:641.2px;top:0;height:21.18px"></div>
<div class="td" style="left:679.8px;width:36.9px;height:21.18px;line-height:21.18px"></div>
<div class="vl" style="left:679.3px;top:0;height:21.18px"></div>
<div class="td" style="left:716.7px;width:37.9px;height:21.18px;line-height:21.18px"></div>
<div class="vl" style="left:716.2px;top:0;height:21.18px"></div>
<div class="td c15" style="left:754.6px;width:76.0px;height:21.18px;line-height:21.18px"><span class="pbar"><span class="pfill" style="width:0%"></span></span><span class="pct">0%</span></div>
<div class="vl" style="left:754.1px;top:0;height:21.18px"></div>
<div class="td" style="left:830.6px;width:67.4px;height:21.18px;line-height:21.18px"><span class="dk">2025-11-07</span></div>
<div class="vl" style="left:830.1px;top:0;height:21.18px"></div>
<div class="vl" style="left:896.5px;top:0;height:21.18px"></div>
</div>
<div class="tr stripe" style="top:126.4px;height:21.18px;width:898px">
<div class="td" style="left:0px;width:26px;height:21.18px;line-height:21.18px">6</div>
<div class="td c1" style="left:26px;width:25.6px;height:21.18px;line-height:21.18px"><i class="cb"></i></div>
<div class="vl vlf" style="left:25.5px;top:0;height:21.18px"></div>
<div class="td" style="left:51.6px;width:92.1px;height:21.18px;line-height:21.18px">GD2025110300008<i class="yu"><span class="zh">逾</span></i></div>
<div class="vl" style="left:51.1px;top:0;height:21.18px"></div>
<div class="td" style="left:143.7px;width:76.0px;height:21.18px;line-height:21.18px">CP20251103022</div>
<div class="vl" style="left:143.2px;top:0;height:21.18px"></div>
<div class="td" style="left:219.7px;width:74.7px;height:21.18px;line-height:21.18px"><span class="dk"><span class="zh">内花键联轴器毂</span></span></div>
<div class="vl" style="left:219.2px;top:0;height:21.18px"></div>
<div class="td" style="left:294.4px;width:63.1px;height:21.18px;line-height:21.18px"><span class="dk">Φ100×50mm</span></div>
<div class="vl" style="left:293.9px;top:0;height:21.18px"></div>
<div class="td" style="left:357.5px;width:48.2px;height:21.18px;line-height:21.18px"><span class="tag tg"><span class="zh">进行中</span></span></div>
<div class="vl" style="left:357.0px;top:0;height:21.18px"></div>
<div class="td" style="left:405.7px;width:49.8px;height:21.18px;line-height:21.18px"><span class="lnk"><span class="zh">质检</span></span></div>
<div class="vl" style="left:405.2px;top:0;height:21.18px"></div>
<div class="td" style="left:455.5px;width:55.8px;height:21.18px;line-height:21.18px">GY2025042721</div>
<div class="vl" style="left:455.0px;top:0;height:21.18px"></div>
<div class="td" style="left:511.3px;width:48.1px;height:21.18px;line-height:21.18px">11</div>
<div class="vl" style="left:510.8px;top:0;height:21.18px"></div>
<div class="td" style="left:559.4px;width:37.4px;height:21.18px;line-height:21.18px">0</div>
<div class="vl" style="left:558.9px;top:0;height:21.18px"></div>
<div class="td" style="left:596.8px;width:44.9px;height:21.18px;line-height:21.18px"><span class="tag tg"><span class="zh">所有人</span></span></div>
<div class="vl" style="left:596.3px;top:0;height:21.18px"></div>
<div class="td" style="left:641.7px;width:38.1px;height:21.18px;line-height:21.18px">4</div>
<div class="vl" style="left:641.2px;top:0;height:21.18px"></div>
<div class="td" style="left:679.8px;width:36.9px;height:21.18px;line-height:21.18px"></div>
<div class="vl" style="left:679.3px;top:0;height:21.18px"></div>
<div class="td" style="left:716.7px;width:37.9px;height:21.18px;line-height:21.18px"></div>
<div class="vl" style="left:716.2px;top:0;height:21.18px"></div>
<div class="td c15" style="left:754.6px;width:76.0px;height:21.18px;line-height:21.18px"><span class="pbar"><span class="pfill" style="width:0%"></span></span><span class="pct">0%</span></div>
<div class="vl" style="left:754.1px;top:0;height:21.18px"></div>
<div class="td" style="left:830.6px;width:67.4px;height:21.18px;line-height:21.18px"><span class="dk">2025-11-07</span></div>
<div class="vl" style="left:830.1px;top:0;height:21.18px"></div>
<div class="vl" style="left:896.5px;top:0;height:21.18px"></div>
</div>
<div class="tr" style="top:147.58px;height:21.18px;width:898px">
<div class="td" style="left:0px;width:26px;height:21.18px;line-height:21.18px">7</div>
<div class="td c1" style="left:26px;width:25.6px;height:21.18px;line-height:21.18px"><i class="cb"></i></div>
<div class="vl vlf" style="left:25.5px;top:0;height:21.18px"></div>
<div class="td" style="left:51.6px;width:92.1px;height:21.18px;line-height:21.18px">GD2025110300008<i class="yu"><span class="zh">逾</span></i></div>
<div class="vl" style="left:51.1px;top:0;height:21.18px"></div>
<div class="td" style="left:143.7px;width:76.0px;height:21.18px;line-height:21.18px">CP20251103022</div>
<div class="vl" style="left:143.2px;top:0;height:21.18px"></div>
<div class="td" style="left:219.7px;width:74.7px;height:21.18px;line-height:21.18px"><span class="dk"><span class="zh">内花键联轴器毂</span></span></div>
<div class="vl" style="left:219.2px;top:0;height:21.18px"></div>
<div class="td" style="left:294.4px;width:63.1px;height:21.18px;line-height:21.18px"><span class="dk">Φ100×50mm</span></div>
<div class="vl" style="left:293.9px;top:0;height:21.18px"></div>
<div class="td" style="left:357.5px;width:48.2px;height:21.18px;line-height:21.18px"><span class="tag tg"><span class="zh">进行中</span></span></div>
<div class="vl" style="left:357.0px;top:0;height:21.18px"></div>
<div class="td" style="left:405.7px;width:49.8px;height:21.18px;line-height:21.18px"><span class="lnk"><span class="zh">表面处理</span></span></div>
<div class="vl" style="left:405.2px;top:0;height:21.18px"></div>
<div class="td" style="left:455.5px;width:55.8px;height:21.18px;line-height:21.18px">GY2025042712</div>
<div class="vl" style="left:455.0px;top:0;height:21.18px"></div>
<div class="td" style="left:511.3px;width:48.1px;height:21.18px;line-height:21.18px">10</div>
<div class="vl" style="left:510.8px;top:0;height:21.18px"></div>
<div class="td" style="left:559.4px;width:37.4px;height:21.18px;line-height:21.18px">0</div>
<div class="vl" style="left:558.9px;top:0;height:21.18px"></div>
<div class="td" style="left:596.8px;width:44.9px;height:21.18px;line-height:21.18px"><span class="tag tg"><span class="zh">所有人</span></span></div>
<div class="vl" style="left:596.3px;top:0;height:21.18px"></div>
<div class="td" style="left:641.7px;width:38.1px;height:21.18px;line-height:21.18px">4</div>
<div class="vl" style="left:641.2px;top:0;height:21.18px"></div>
<div class="td" style="left:679.8px;width:36.9px;height:21.18px;line-height:21.18px"></div>
<div class="vl" style="left:679.3px;top:0;height:21.18px"></div>
<div class="td" style="left:716.7px;width:37.9px;height:21.18px;line-height:21.18px"></div>
<div class="vl" style="left:716.2px;top:0;height:21.18px"></div>
<div class="td c15" style="left:754.6px;width:76.0px;height:21.18px;line-height:21.18px"><span class="pbar"><span class="pfill" style="width:0%"></span></span><span class="pct">0%</span></div>
<div class="vl" style="left:754.1px;top:0;height:21.18px"></div>
<div class="td" style="left:830.6px;width:67.4px;height:21.18px;line-height:21.18px"><span class="dk">2025-11-07</span></div>
<div class="vl" style="left:830.1px;top:0;height:21.18px"></div>
<div class="vl" style="left:896.5px;top:0;height:21.18px"></div>
</div>
<div class="tr stripe" style="top:168.76px;height:21.18px;width:898px">
<div class="td" style="left:0px;width:26px;height:21.18px;line-height:21.18px">8</div>
<div class="td c1" style="left:26px;width:25.6px;height:21.18px;line-height:21.18px"><i class="cb"></i></div>
<div class="vl vlf" style="left:25.5px;top:0;height:21.18px"></div>
<div class="td" style="left:51.6px;width:92.1px;height:21.18px;line-height:21.18px">GD2025110300008<i class="yu"><span class="zh">逾</span></i></div>
<div class="vl" style="left:51.1px;top:0;height:21.18px"></div>
<div class="td" style="left:143.7px;width:76.0px;height:21.18px;line-height:21.18px">CP20251103022</div>
<div class="vl" style="left:143.2px;top:0;height:21.18px"></div>
<div class="td" style="left:219.7px;width:74.7px;height:21.18px;line-height:21.18px"><span class="dk"><span class="zh">内花键联轴器毂</span></span></div>
<div class="vl" style="left:219.2px;top:0;height:21.18px"></div>
<div class="td" style="left:294.4px;width:63.1px;height:21.18px;line-height:21.18px"><span class="dk">Φ100×50mm</span></div>
<div class="vl" style="left:293.9px;top:0;height:21.18px"></div>
<div class="td" style="left:357.5px;width:48.2px;height:21.18px;line-height:21.18px"><span class="tag tg"><span class="zh">进行中</span></span></div>
<div class="vl" style="left:357.0px;top:0;height:21.18px"></div>
<div class="td" style="left:405.7px;width:49.8px;height:21.18px;line-height:21.18px"><span class="lnk"><span class="zh">入库</span></span></div>
<div class="vl" style="left:405.2px;top:0;height:21.18px"></div>
<div class="td" style="left:455.5px;width:55.8px;height:21.18px;line-height:21.18px">GY2025042713</div>
<div class="vl" style="left:455.0px;top:0;height:21.18px"></div>
<div class="td" style="left:511.3px;width:48.1px;height:21.18px;line-height:21.18px">16</div>
<div class="vl" style="left:510.8px;top:0;height:21.18px"></div>
<div class="td" style="left:559.4px;width:37.4px;height:21.18px;line-height:21.18px">0</div>
<div class="vl" style="left:558.9px;top:0;height:21.18px"></div>
<div class="td" style="left:596.8px;width:44.9px;height:21.18px;line-height:21.18px"><span class="tag tg"><span class="zh">所有人</span></span></div>
<div class="vl" style="left:596.3px;top:0;height:21.18px"></div>
<div class="td" style="left:641.7px;width:38.1px;height:21.18px;line-height:21.18px">4</div>
<div class="vl" style="left:641.2px;top:0;height:21.18px"></div>
<div class="td" style="left:679.8px;width:36.9px;height:21.18px;line-height:21.18px"></div>
<div class="vl" style="left:679.3px;top:0;height:21.18px"></div>
<div class="td" style="left:716.7px;width:37.9px;height:21.18px;line-height:21.18px"></div>
<div class="vl" style="left:716.2px;top:0;height:21.18px"></div>
<div class="td c15" style="left:754.6px;width:76.0px;height:21.18px;line-height:21.18px"><span class="pbar"><span class="pfill" style="width:0%"></span></span><span class="pct">0%</span></div>
<div class="vl" style="left:754.1px;top:0;height:21.18px"></div>
<div class="td" style="left:830.6px;width:67.4px;height:21.18px;line-height:21.18px"><span class="dk">2025-11-07</span></div>
<div class="vl" style="left:830.1px;top:0;height:21.18px"></div>
<div class="vl" style="left:896.5px;top:0;height:21.18px"></div>
</div>
<div class="tr" style="top:189.94px;height:21.18px;width:898px">
<div class="td" style="left:0px;width:26px;height:21.18px;line-height:21.18px">9</div>
<div class="td c1" style="left:26px;width:25.6px;height:21.18px;line-height:21.18px"><i class="cb"></i></div>
<div class="vl vlf" style="left:25.5px;top:0;height:21.18px"></div>
<div class="td" style="left:51.6px;width:92.1px;height:21.18px;line-height:21.18px">GD2025110300008<i class="yu"><span class="zh">逾</span></i></div>
<div class="vl" style="left:51.1px;top:0;height:21.18px"></div>
<div class="td" style="left:143.7px;width:76.0px;height:21.18px;line-height:21.18px">CP20251103022</div>
<div class="vl" style="left:143.2px;top:0;height:21.18px"></div>
<div class="td" style="left:219.7px;width:74.7px;height:21.18px;line-height:21.18px"><span class="dk"><span class="zh">内花键联轴器毂</span></span></div>
<div class="vl" style="left:219.2px;top:0;height:21.18px"></div>
<div class="td" style="left:294.4px;width:63.1px;height:21.18px;line-height:21.18px"><span class="dk">Φ100×50mm</span></div>
<div class="vl" style="left:293.9px;top:0;height:21.18px"></div>
<div class="td" style="left:357.5px;width:48.2px;height:21.18px;line-height:21.18px"><span class="tag tg"><span class="zh">进行中</span></span></div>
<div class="vl" style="left:357.0px;top:0;height:21.18px"></div>
<div class="td" style="left:405.7px;width:49.8px;height:21.18px;line-height:21.18px"><span class="lnk"><span class="zh">磨床</span></span></div>
<div class="vl" style="left:405.2px;top:0;height:21.18px"></div>
<div class="td" style="left:455.5px;width:55.8px;height:21.18px;line-height:21.18px">GY2025042716</div>
<div class="vl" style="left:455.0px;top:0;height:21.18px"></div>
<div class="td" style="left:511.3px;width:48.1px;height:21.18px;line-height:21.18px">11</div>
<div class="vl" style="left:510.8px;top:0;height:21.18px"></div>
<div class="td" style="left:559.4px;width:37.4px;height:21.18px;line-height:21.18px">0</div>
<div class="vl" style="left:558.9px;top:0;height:21.18px"></div>
<div class="td" style="left:596.8px;width:44.9px;height:21.18px;line-height:21.18px"><span class="tag tg"><span class="zh">所有人</span></span></div>
<div class="vl" style="left:596.3px;top:0;height:21.18px"></div>
<div class="td" style="left:641.7px;width:38.1px;height:21.18px;line-height:21.18px">4</div>
<div class="vl" style="left:641.2px;top:0;height:21.18px"></div>
<div class="td" style="left:679.8px;width:36.9px;height:21.18px;line-height:21.18px"></div>
<div class="vl" style="left:679.3px;top:0;height:21.18px"></div>
<div class="td" style="left:716.7px;width:37.9px;height:21.18px;line-height:21.18px"></div>
<div class="vl" style="left:716.2px;top:0;height:21.18px"></div>
<div class="td c15" style="left:754.6px;width:76.0px;height:21.18px;line-height:21.18px"><span class="pbar"><span class="pfill" style="width:0%"></span></span><span class="pct">0%</span></div>
<div class="vl" style="left:754.1px;top:0;height:21.18px"></div>
<div class="td" style="left:830.6px;width:67.4px;height:21.18px;line-height:21.18px"><span class="dk">2025-11-07</span></div>
<div class="vl" style="left:830.1px;top:0;height:21.18px"></div>
<div class="vl" style="left:896.5px;top:0;height:21.18px"></div>
</div>
<div class="hl" style="left:0;top:210.92px;width:897px"></div>
</div>
  <div class="tline" style="left:99px"></div>
  <div class="tline" style="left:997px;height:542px"></div>
  <div class="vscroll"></div>
 </div>
 <div class="strip">
<div class="stbl" style="left:-25.8px;top:-3.2px;width:1227.8px">
<div class="tr" style="top:0px;height:25.63px;width:1227.8px">
<div class="td" style="left:0.0px;width:30.2px;height:25.63px;line-height:25.63px">1</div>
<div class="td c1" style="left:30.2px;width:30.0px;height:25.63px;line-height:25.63px"><i class="cb"></i></div>
<div class="vl vlf" style="left:29.7px;top:0;height:25.63px"></div>
<div class="td" style="left:60.2px;width:110.1px;height:25.63px;line-height:25.63px">GD2025110300008<i class="yu"><span class="zh">逾</span></i></div>
<div class="vl" style="left:59.7px;top:0;height:25.63px"></div>
<div class="td" style="left:170.3px;width:90.9px;height:25.63px;line-height:25.63px">CP20251103022</div>
<div class="vl" style="left:169.8px;top:0;height:25.63px"></div>
<div class="td" style="left:261.2px;width:89.9px;height:25.63px;line-height:25.63px"><span class="dk"><span class="zh">内花键联轴器毂</span></span></div>
<div class="vl" style="left:260.7px;top:0;height:25.63px"></div>
<div class="td" style="left:351.1px;width:75.7px;height:25.63px;line-height:25.63px"><span class="dk">Φ100×50mm</span></div>
<div class="vl" style="left:350.6px;top:0;height:25.63px"></div>
<div class="td" style="left:426.8px;width:57.2px;height:25.63px;line-height:25.63px"><span class="tag to"><span class="zh">已完成</span></span></div>
<div class="vl" style="left:426.3px;top:0;height:25.63px"></div>
<div class="td" style="left:484.0px;width:59.7px;height:25.63px;line-height:25.63px"><span class="lnk"><span class="zh">车床</span></span></div>
<div class="vl" style="left:483.5px;top:0;height:25.63px"></div>
<div class="td" style="left:543.7px;width:67.7px;height:25.63px;line-height:25.63px">GY2025042707</div>
<div class="vl" style="left:543.2px;top:0;height:25.63px"></div>
<div class="td" style="left:611.4px;width:56.6px;height:25.63px;line-height:25.63px">5</div>
<div class="vl" style="left:610.9px;top:0;height:25.63px"></div>
<div class="td" style="left:668.0px;width:45.3px;height:25.63px;line-height:25.63px">0</div>
<div class="vl" style="left:667.5px;top:0;height:25.63px"></div>
<div class="td" style="left:713.3px;width:52.9px;height:25.63px;line-height:25.63px"><span class="tag tg"><span class="zh">所有人</span></span></div>
<div class="vl" style="left:712.8px;top:0;height:25.63px"></div>
<div class="td" style="left:766.2px;width:44.9px;height:25.63px;line-height:25.63px">4</div>
<div class="vl" style="left:765.7px;top:0;height:25.63px"></div>
<div class="td" style="left:811.1px;width:46.3px;height:25.63px;line-height:25.63px">4</div>
<div class="vl" style="left:810.6px;top:0;height:25.63px"></div>
<div class="td" style="left:857.4px;width:44.9px;height:25.63px;line-height:25.63px">0</div>
<div class="vl" style="left:856.9px;top:0;height:25.63px"></div>
<div class="td c15" style="left:902.3px;width:245.0px;height:25.63px;line-height:25.63px"><span class="pbar"><span class="pfill pg" style="width:100%"></span></span><span class="pct">100%</span></div>
<div class="vl" style="left:901.8px;top:0;height:25.63px"></div>
<div class="td" style="left:1147.3px;width:80.5px;height:25.63px;line-height:25.63px"><span class="dk">2025-11-07</span></div>
<div class="vl" style="left:1146.8px;top:0;height:25.63px"></div>
</div>
<div class="tr stripe" style="top:25.63px;height:25.63px;width:1227.8px">
<div class="td" style="left:0.0px;width:30.2px;height:25.63px;line-height:25.63px">2</div>
<div class="td c1" style="left:30.2px;width:30.0px;height:25.63px;line-height:25.63px"><i class="cb"></i></div>
<div class="vl vlf" style="left:29.7px;top:0;height:25.63px"></div>
<div class="td" style="left:60.2px;width:110.1px;height:25.63px;line-height:25.63px">GD2025110300008<i class="yu"><span class="zh">逾</span></i></div>
<div class="vl" style="left:59.7px;top:0;height:25.63px"></div>
<div class="td" style="left:170.3px;width:90.9px;height:25.63px;line-height:25.63px">CP20251103022</div>
<div class="vl" style="left:169.8px;top:0;height:25.63px"></div>
<div class="td" style="left:261.2px;width:89.9px;height:25.63px;line-height:25.63px"><span class="dk"><span class="zh">内花键联轴器毂</span></span></div>
<div class="vl" style="left:260.7px;top:0;height:25.63px"></div>
<div class="td" style="left:351.1px;width:75.7px;height:25.63px;line-height:25.63px"><span class="dk">Φ100×50mm</span></div>
<div class="vl" style="left:350.6px;top:0;height:25.63px"></div>
<div class="td" style="left:426.8px;width:57.2px;height:25.63px;line-height:25.63px"><span class="tag tg"><span class="zh">进行中</span></span></div>
<div class="vl" style="left:426.3px;top:0;height:25.63px"></div>
<div class="td" style="left:484.0px;width:59.7px;height:25.63px;line-height:25.63px"><span class="lnk">CNC-A</span></div>
<div class="vl" style="left:483.5px;top:0;height:25.63px"></div>
<div class="td" style="left:543.7px;width:67.7px;height:25.63px;line-height:25.63px">GY2025042702</div>
<div class="vl" style="left:543.2px;top:0;height:25.63px"></div>
<div class="td" style="left:611.4px;width:56.6px;height:25.63px;line-height:25.63px">3</div>
<div class="vl" style="left:610.9px;top:0;height:25.63px"></div>
<div class="td" style="left:668.0px;width:45.3px;height:25.63px;line-height:25.63px">0</div>
<div class="vl" style="left:667.5px;top:0;height:25.63px"></div>
<div class="td" style="left:713.3px;width:52.9px;height:25.63px;line-height:25.63px"><span class="tag tb"><span class="zh">苏星河</span>,<span class="zh">李秋水</span></span></div>
<div class="vl" style="left:712.8px;top:0;height:25.63px"></div>
<div class="td" style="left:766.2px;width:44.9px;height:25.63px;line-height:25.63px">4</div>
<div class="vl" style="left:765.7px;top:0;height:25.63px"></div>
<div class="td" style="left:811.1px;width:46.3px;height:25.63px;line-height:25.63px">3</div>
<div class="vl" style="left:810.6px;top:0;height:25.63px"></div>
<div class="td" style="left:857.4px;width:44.9px;height:25.63px;line-height:25.63px">0</div>
<div class="vl" style="left:856.9px;top:0;height:25.63px"></div>
<div class="td c15" style="left:902.3px;width:245.0px;height:25.63px;line-height:25.63px"><span class="pbar"><span class="pfill" style="width:75%"></span></span><span class="pct">75%</span></div>
<div class="vl" style="left:901.8px;top:0;height:25.63px"></div>
<div class="td" style="left:1147.3px;width:80.5px;height:25.63px;line-height:25.63px"><span class="dk">2025-11-07</span></div>
<div class="vl" style="left:1146.8px;top:0;height:25.63px"></div>
</div>
<div class="tr" style="top:51.26px;height:25.63px;width:1227.8px">
<div class="td" style="left:0.0px;width:30.2px;height:25.63px;line-height:25.63px">3</div>
<div class="td c1" style="left:30.2px;width:30.0px;height:25.63px;line-height:25.63px"><i class="cb"></i></div>
<div class="vl vlf" style="left:29.7px;top:0;height:25.63px"></div>
<div class="td" style="left:60.2px;width:110.1px;height:25.63px;line-height:25.63px">GD2025110300008<i class="yu"><span class="zh">逾</span></i></div>
<div class="vl" style="left:59.7px;top:0;height:25.63px"></div>
<div class="td" style="left:170.3px;width:90.9px;height:25.63px;line-height:25.63px">CP20251103022</div>
<div class="vl" style="left:169.8px;top:0;height:25.63px"></div>
<div class="td" style="left:261.2px;width:89.9px;height:25.63px;line-height:25.63px"><span class="dk"><span class="zh">内花键联轴器毂</span></span></div>
<div class="vl" style="left:260.7px;top:0;height:25.63px"></div>
<div class="td" style="left:351.1px;width:75.7px;height:25.63px;line-height:25.63px"><span class="dk">Φ100×50mm</span></div>
<div class="vl" style="left:350.6px;top:0;height:25.63px"></div>
<div class="td" style="left:426.8px;width:57.2px;height:25.63px;line-height:25.63px"><span class="tag tg"><span class="zh">进行中</span></span></div>
<div class="vl" style="left:426.3px;top:0;height:25.63px"></div>
<div class="td" style="left:484.0px;width:59.7px;height:25.63px;line-height:25.63px"><span class="lnk">CNC-B</span></div>
<div class="vl" style="left:483.5px;top:0;height:25.63px"></div>
<div class="td" style="left:543.7px;width:67.7px;height:25.63px;line-height:25.63px">GY2025042703</div>
<div class="vl" style="left:543.2px;top:0;height:25.63px"></div>
<div class="td" style="left:611.4px;width:56.6px;height:25.63px;line-height:25.63px">6</div>
<div class="vl" style="left:610.9px;top:0;height:25.63px"></div>
<div class="td" style="left:668.0px;width:45.3px;height:25.63px;line-height:25.63px">0</div>
<div class="vl" style="left:667.5px;top:0;height:25.63px"></div>
<div class="td" style="left:713.3px;width:52.9px;height:25.63px;line-height:25.63px"><span class="tag tg"><span class="zh">所有人</span></span></div>
<div class="vl" style="left:712.8px;top:0;height:25.63px"></div>
<div class="td" style="left:766.2px;width:44.9px;height:25.63px;line-height:25.63px">4</div>
<div class="vl" style="left:765.7px;top:0;height:25.63px"></div>
<div class="td" style="left:811.1px;width:46.3px;height:25.63px;line-height:25.63px">3</div>
<div class="vl" style="left:810.6px;top:0;height:25.63px"></div>
<div class="td" style="left:857.4px;width:44.9px;height:25.63px;line-height:25.63px">0</div>
<div class="vl" style="left:856.9px;top:0;height:25.63px"></div>
<div class="td c15" style="left:902.3px;width:245.0px;height:25.63px;line-height:25.63px"><span class="pbar"><span class="pfill" style="width:75%"></span></span><span class="pct">75%</span></div>
<div class="vl" style="left:901.8px;top:0;height:25.63px"></div>
<div class="td" style="left:1147.3px;width:80.5px;height:25.63px;line-height:25.63px"><span class="dk">2025-11-07</span></div>
<div class="vl" style="left:1146.8px;top:0;height:25.63px"></div>
</div>
<div class="tr stripe" style="top:76.89px;height:25.63px;width:1227.8px">
<div class="td" style="left:0.0px;width:30.2px;height:25.63px;line-height:25.63px">4</div>
<div class="td c1" style="left:30.2px;width:30.0px;height:25.63px;line-height:25.63px"><i class="cb"></i></div>
<div class="vl vlf" style="left:29.7px;top:0;height:25.63px"></div>
<div class="td" style="left:60.2px;width:110.1px;height:25.63px;line-height:25.63px">GD2025110300008<i class="yu"><span class="zh">逾</span></i></div>
<div class="vl" style="left:59.7px;top:0;height:25.63px"></div>
<div class="td" style="left:170.3px;width:90.9px;height:25.63px;line-height:25.63px">CP20251103022</div>
<div class="vl" style="left:169.8px;top:0;height:25.63px"></div>
<div class="td" style="left:261.2px;width:89.9px;height:25.63px;line-height:25.63px"><span class="dk"><span class="zh">内花键联轴器毂</span></span></div>
<div class="vl" style="left:260.7px;top:0;height:25.63px"></div>
<div class="td" style="left:351.1px;width:75.7px;height:25.63px;line-height:25.63px"><span class="dk">Φ100×50mm</span></div>
<div class="vl" style="left:350.6px;top:0;height:25.63px"></div>
<div class="td" style="left:426.8px;width:57.2px;height:25.63px;line-height:25.63px"><span class="tag tg"><span class="zh">进行中</span></span></div>
<div class="vl" style="left:426.3px;top:0;height:25.63px"></div>
<div class="td" style="left:484.0px;width:59.7px;height:25.63px;line-height:25.63px"><span class="lnk"><span class="zh">线割</span></span></div>
<div class="vl" style="left:483.5px;top:0;height:25.63px"></div>
<div class="td" style="left:543.7px;width:67.7px;height:25.63px;line-height:25.63px">GY2025042708</div>
<div class="vl" style="left:543.2px;top:0;height:25.63px"></div>
<div class="td" style="left:611.4px;width:56.6px;height:25.63px;line-height:25.63px">11</div>
<div class="vl" style="left:610.9px;top:0;height:25.63px"></div>
<div class="td" style="left:668.0px;width:45.3px;height:25.63px;line-height:25.63px">0</div>
<div class="vl" style="left:667.5px;top:0;height:25.63px"></div>
<div class="td" style="left:713.3px;width:52.9px;height:25.63px;line-height:25.63px"><span class="tag tg"><span class="zh">所有人</span></span></div>
<div class="vl" style="left:712.8px;top:0;height:25.63px"></div>
<div class="td" style="left:766.2px;width:44.9px;height:25.63px;line-height:25.63px">4</div>
<div class="vl" style="left:765.7px;top:0;height:25.63px"></div>
<div class="td" style="left:811.1px;width:46.3px;height:25.63px;line-height:25.63px">2</div>
<div class="vl" style="left:810.6px;top:0;height:25.63px"></div>
<div class="td" style="left:857.4px;width:44.9px;height:25.63px;line-height:25.63px">0</div>
<div class="vl" style="left:856.9px;top:0;height:25.63px"></div>
<div class="td c15" style="left:902.3px;width:245.0px;height:25.63px;line-height:25.63px"><span class="pbar"><span class="pfill" style="width:50%"></span></span><span class="pct">50%</span></div>
<div class="vl" style="left:901.8px;top:0;height:25.63px"></div>
<div class="td" style="left:1147.3px;width:80.5px;height:25.63px;line-height:25.63px"><span class="dk">2025-11-07</span></div>
<div class="vl" style="left:1146.8px;top:0;height:25.63px"></div>
</div>
</div>
 </div>
</div>
</body></html>
